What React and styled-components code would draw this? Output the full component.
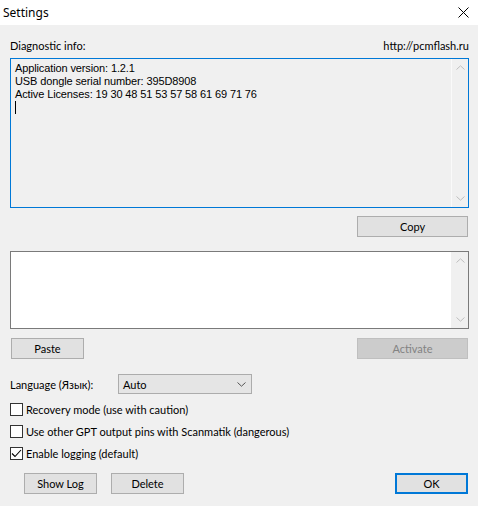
import React from "react";
import styled, { createGlobalStyle } from "styled-components";

const Global = createGlobalStyle`
  html, body { margin: 0; padding: 0; background: #f0f0f0; }
  body { font-family: Lato, "Noto Sans", sans-serif; font-size: 11px; color: #000; }
  * { box-sizing: border-box; }
`;

const Window = styled.div`
  width: 478px;
  height: 506px;
  display: flex;
  flex-direction: column;
  background: #f0f0f0;
  overflow: hidden;
`;

const TitleBar = styled.div`
  height: 25px;
  background: #fff;
  display: flex;
  align-items: center;
  justify-content: space-between;
  padding: 0 9px 0 3px;
  font-family: "Noto Sans", sans-serif;
  font-size: 12px;
`;

const Content = styled.div`
  display: flex;
  flex-direction: column;
  padding: 12px 9px 0 10px;
`;

const HeaderRow = styled.div`
  height: 17px;
  display: flex;
  justify-content: space-between;
  align-items: center;
  margin-bottom: 4px;
`;

const Box = styled.div`
  position: relative;
  height: ${(p) => p.$h}px;
  margin-top: ${(p) => p.$mt || 0}px;
  border: 1px solid ${(p) => (p.$focused ? "#0078d7" : "#7a7a7a")};
  background: ${(p) => (p.$readonly ? "#f0f0f0" : "#fff")};
  display: flex;
`;

const BoxText = styled.div`
  flex: 1;
  padding: 3px 4px;
  font-family: "Liberation Sans", Arial, sans-serif;
  font-size: 11px;
  letter-spacing: -0.12px;
  line-height: 13px;
`;

const Caret = styled.div`
  width: 1px;
  height: 13px;
  background: #000;
`;

const ScrollTrack = styled.div`
  width: 17px;
  background: #f0f0f0;
  display: flex;
  flex-direction: column;
  justify-content: space-between;
  align-items: center;
  padding: 6px 0;
  border-left: 1px solid ${(p) => (p.$readonly ? "#fafafa" : "#f0f0f0")};
`;

const ButtonRow = styled.div`
  display: flex;
  justify-content: ${(p) => p.$justify || "space-between"};
  margin-top: ${(p) => p.$mt || 0}px;
  padding-right: ${(p) => p.$pr || 0}px;
  padding-left: ${(p) => p.$pl || 0}px;
  gap: ${(p) => p.$gap || 0}px;
`;

const Button = styled.div`
  width: ${(p) => p.$w || 73}px;
  height: 21px;
  display: flex;
  align-items: center;
  justify-content: center;
  background: ${(p) => (p.$disabled ? "#cccccc" : "#e1e1e1")};
  border: ${(p) => (p.$default ? "2px solid #0078d7" : p.$disabled ? "1px solid #bfbfbf" : "1px solid #adadad")};
  color: ${(p) => (p.$disabled ? "#838383" : "#000")};
`;

const LangRow = styled.div`
  display: flex;
  align-items: center;
  margin-top: 15px;
  height: 20px;
`;

const LangLabel = styled.div`
  width: 108px;
`;

const Select = styled.div`
  width: 134px;
  height: 20px;
  background: #e5e5e5;
  border: 1px solid #acacac;
  display: flex;
  align-items: center;
  justify-content: space-between;
  padding: 0 5px 0 4px;
`;

const CheckRow = styled.div`
  display: flex;
  align-items: center;
  height: 22px;
  gap: 3px;
  margin-top: ${(p) => p.$mt || 0}px;
`;

const CheckBox = styled.div`
  width: 13px;
  height: 13px;
  border: 1px solid #333;
  background: #fff;
  display: flex;
  align-items: center;
  justify-content: center;
`;

const UpArrow = () => (
  <svg width="9" height="5" viewBox="0 0 9 5"><polyline points="0.5,4.5 4.5,0.8 8.5,4.5" fill="none" stroke="#bfbfbf" strokeWidth="1" /></svg>
);
const DownArrow = ({ color = "#bfbfbf" }) => (
  <svg width="9" height="5" viewBox="0 0 9 5"><polyline points="0.5,0.5 4.5,4.2 8.5,0.5" fill="none" stroke={color} strokeWidth="1" /></svg>
);

const Check = ({ checked }) => (
  <CheckBox>
    {checked && (
      <svg width="11" height="9" viewBox="0 0 11 9"><polyline points="1,4.5 4,7.5 10,1" fill="none" stroke="#000" strokeWidth="1.1" /></svg>
    )}
  </CheckBox>
);

export default function App() {
  return (
    <Window>
      <Global />
      <TitleBar>
        <span>Settings</span>
        <svg width="11" height="11" viewBox="0 0 11 11"><path d="M0.5 0.5 L10.5 10.5 M10.5 0.5 L0.5 10.5" stroke="#000" strokeWidth="1" /></svg>
      </TitleBar>
      <Content>
        <HeaderRow>
          <span>Diagnostic info:</span>
          <span>http://pcmflash.ru</span>
        </HeaderRow>
        <Box $h={150} $focused $readonly>
          <BoxText>
            <div>Application version: 1.2.1</div>
            <div>USB dongle serial number: 395D8908</div>
            <div>Active Licenses: 19 30 48 51 53 57 58 61 69 71 76</div>
            <Caret />
          </BoxText>
          <ScrollTrack $readonly>
            <UpArrow />
            <DownArrow />
          </ScrollTrack>
        </Box>
        <ButtonRow $justify="flex-end" $mt={8} $pr={1}>
          <Button $w={111}>Copy</Button>
        </ButtonRow>
        <Box $h={78} $mt={14}>
          <BoxText />
          <ScrollTrack>
            <UpArrow />
            <DownArrow />
          </ScrollTrack>
        </Box>
        <ButtonRow $mt={9} $pl={1} $pr={1}>
          <Button>Paste</Button>
          <Button $w={111} $disabled>Activate</Button>
        </ButtonRow>
        <LangRow>
          <LangLabel>Language (Язык):</LangLabel>
          <Select>
            <span>Auto</span>
            <DownArrow color="#555" />
          </Select>
        </LangRow>
        <CheckRow $mt={4}>
          <Check />
          <span>Recovery mode (use with caution)</span>
        </CheckRow>
        <CheckRow>
          <Check />
          <span>Use other GPT output pins with Scanmatik (dangerous)</span>
        </CheckRow>
        <CheckRow>
          <Check checked />
          <span>Enable logging (default)</span>
        </CheckRow>
        <ButtonRow $mt={9} $pl={14} $pr={1}>
          <ButtonRow $gap={14}>
            <Button>Show Log</Button>
            <Button>Delete</Button>
          </ButtonRow>
          <Button $default>OK</Button>
        </ButtonRow>
      </Content>
    </Window>
  );
}
